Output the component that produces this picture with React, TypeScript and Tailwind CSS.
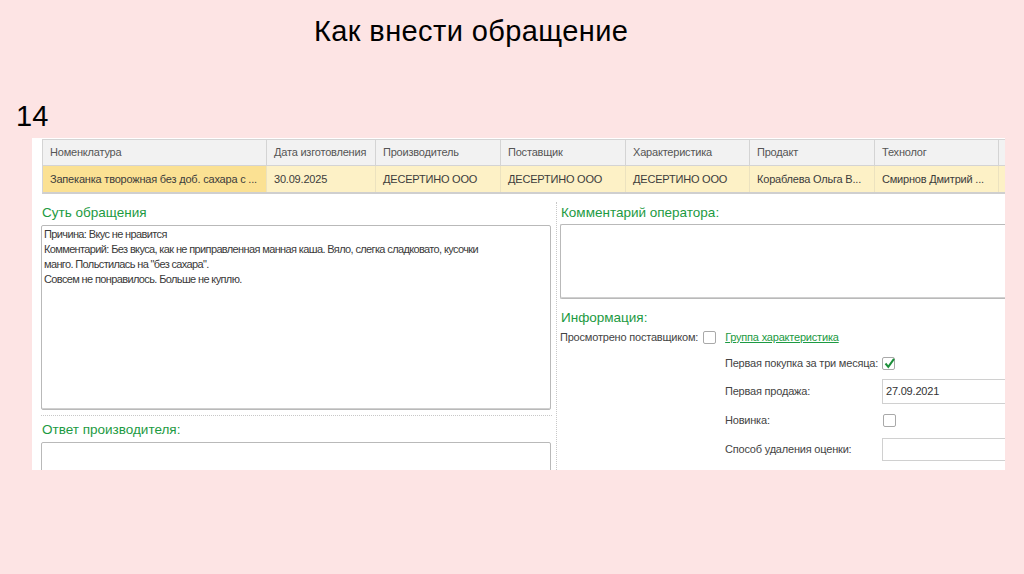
import React from "react";

const F = { fontFamily: '"Liberation Sans", Arial, sans-serif' };

const cols = [
  { h: "Номенклатура", d: "Запеканка творожная без доб. сахара с ...", w: 224, first: true },
  { h: "Дата изготовления", d: "30.09.2025", w: 109 },
  { h: "Производитель", d: "ДЕСЕРТИНО ООО", w: 125 },
  { h: "Поставщик", d: "ДЕСЕРТИНО ООО", w: 125 },
  { h: "Характеристика", d: "ДЕСЕРТИНО ООО", w: 124 },
  { h: "Продакт", d: "Кораблева Ольга В...", w: 125 },
  { h: "Технолог", d: "Смирнов Дмитрий ...", w: 124 },
  { h: "", d: "", w: 10 },
];

function Check({ checked }: { checked?: boolean }) {
  return (
    <div className="w-[13px] h-[13px] border border-[#a9a9a9] rounded-[2px] bg-white relative shrink-0">
      {checked && (
        <svg viewBox="0 0 13 13" className="absolute left-0 top-[-1px] w-[13px] h-[13px]">
          <path d="M2.5 6.5 L5.3 9.8 L11 1.8" fill="none" stroke="#1c8f3a" strokeWidth="2" />
        </svg>
      )}
    </div>
  );
}

export default function App() {
  return (
    <div className="w-[1024px] h-[574px] bg-[#fde4e4] overflow-hidden" style={F}>
      <div className="pt-[15px] pl-[314px] text-[29px] leading-[32px] text-black tracking-[0.4px]">Как внести обращение</div>
      <div className="pt-[53px] pl-[16px] text-[29px] leading-[32px] text-black h-[91px]">14</div>
      <div className="ml-[32px] w-[973px] h-[332px] bg-white overflow-hidden">
        {/* table */}
        <div className="pl-[10px] pt-[1px]">
          <div className="flex border-t border-l border-[#d4d4d4] w-[970px]">
            {cols.map((c, i) => (
              <div
                key={i}
                className="h-[26px] bg-[#f2f2f2] border-r border-b border-[#d4d4d4] text-[#555] text-[11px] flex items-center pl-[7px] shrink-0 tracking-[-0.2px]"
                style={{ width: c.w }}
              >
                {c.h}
              </div>
            ))}
          </div>
          <div className="flex border-l border-[#d4d4d4] border-b-2 border-b-[#cfcfcf] w-[970px]">
            {cols.map((c, i) => (
              <div
                key={i}
                className={`h-[26px] ${c.first ? "bg-[#fbe193]" : "bg-[#fdf1c6]"} border-r border-[#ece2bf] text-[#3c3c3c] text-[11px] flex items-center pl-[7px] shrink-0 whitespace-nowrap overflow-hidden tracking-[-0.2px]`}
                style={{ width: c.w }}
              >
                {c.d}
              </div>
            ))}
          </div>
        </div>
        {/* body */}
        <div className="flex">
          {/* left */}
          <div className="w-[524px] pl-[9px] pr-[5px] pt-[10px]">
            <div className="text-[13.5px] leading-[17px] text-[#1c9a42] pl-[1px]">Суть обращения</div>
            <div className="mt-[4px] h-[185px] w-[510px] border border-[#b9b9b9] rounded-[2px] shadow-[inset_0_-1px_0_#d0d0d0] pl-[2px] pt-[1px] text-[11px] leading-[15px] text-[#3a3a3a] tracking-[-0.63px]">
              Причина: Вкус не нравится
              <br />
              Комментарий: Без вкуса, как не приправленная манная каша. Вяло, слегка сладковато, кусочки
              <br />
              манго. Польстилась на "без сахара".
              <br />
              Совсем не понравилось. Больше не куплю.
            </div>
            <div className="mt-[5px] border-t border-dotted border-[#c8c8c8] w-[511px]" />
            <div className="mt-[5px] text-[13.5px] leading-[17px] text-[#1c9a42] pl-[1px]">Ответ производителя:</div>
            <div className="mt-[4px] h-[40px] w-[510px] border border-[#b9b9b9] rounded-[2px]" />
          </div>
          {/* separator */}
          <div className="w-0 border-l border-dotted border-[#c8c8c8] h-[280px] mt-[8px]" />
          {/* right */}
          <div className="flex-1 pl-[3px] pt-[10px]">
            <div className="text-[13.5px] leading-[17px] text-[#1c9a42] pl-[1px]">Комментарий оператора:</div>
            <div className="mt-[3px] h-[75px] border border-r-0 border-[#b9b9b9] rounded-l-[2px] shadow-[inset_0_-1px_0_#d0d0d0]" />
            <div className="mt-[10px] text-[13.5px] leading-[17px] text-[#1c9a42] pl-[1px]">Информация:</div>
            <div className="flex items-center h-[18px] mt-[2px] text-[11px] text-[#444] tracking-[-0.2px]">
              <span>Просмотрено поставщиком:</span>
              <div className="ml-[5px]"><Check /></div>
              <span className="ml-[9px] text-[#1c9a42] underline">Группа характеристика</span>
            </div>
            <div className="pl-[165px] text-[11px] text-[#444] tracking-[-0.2px]">
              <div className="flex items-center h-[22px] mt-[6px]">
                <span className="w-[157px]">Первая покупка за три месяца:</span>
                <Check checked />
              </div>
              <div className="flex items-center h-[28px] mt-[3px]">
                <span className="w-[157px]">Первая продажа:</span>
                <div className="flex-1 h-[25px] border border-r-0 border-[#d0d0d0] flex items-center pl-[3px] text-[#333]">27.09.2021</div>
              </div>
              <div className="flex items-center h-[28px] mt-[1px]">
                <span className="w-[158px]">Новинка:</span>
                <Check />
              </div>
              <div className="flex items-center h-[28px] mt-[1px]">
                <span className="w-[157px]">Способ удаления оценки:</span>
                <div className="flex-1 h-[23px] border border-r-0 border-[#d0d0d0]" />
              </div>
            </div>
          </div>
        </div>
      </div>
    </div>
  );
}
